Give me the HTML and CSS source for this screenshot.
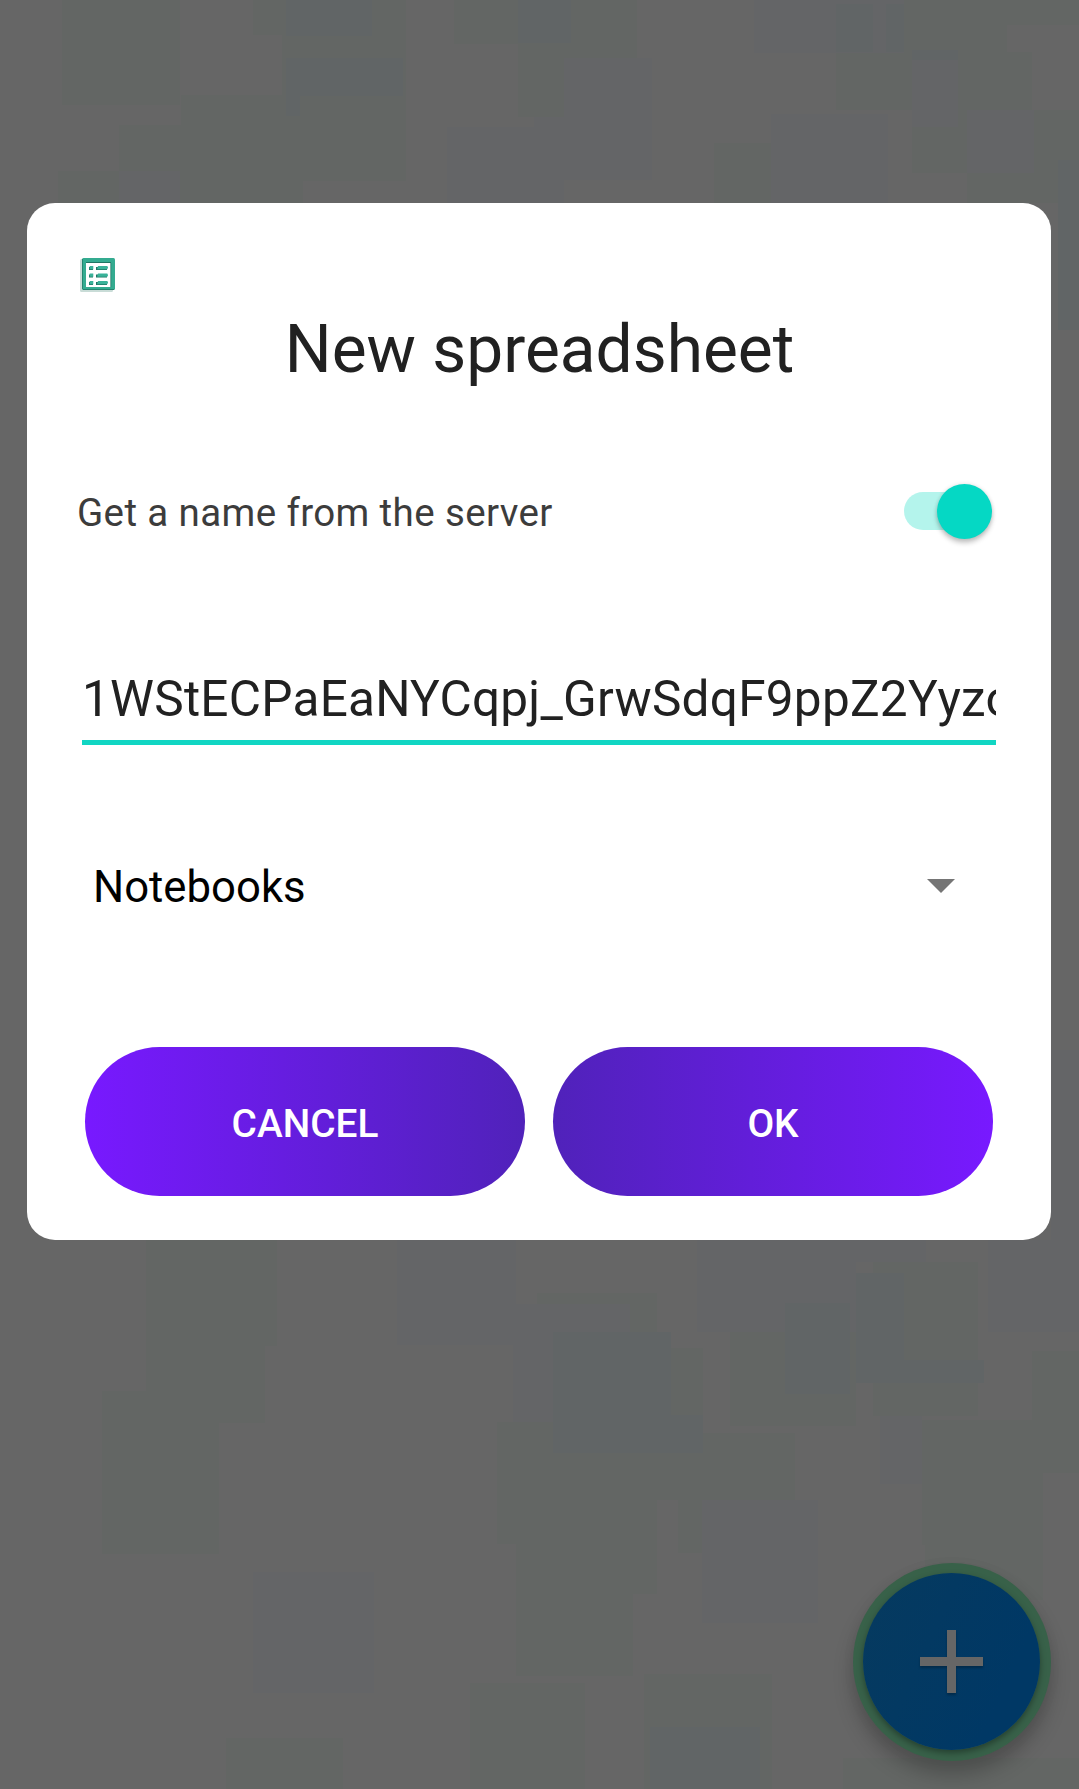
FILE: index.html
```html
<!DOCTYPE html>
<html lang="en">
<head>
<meta charset="utf-8">
<title>New spreadsheet</title>
<link rel="stylesheet" href="styles.css">
</head>
<body>
<svg class="backdrop" viewBox="0 0 1079 1789" aria-hidden="true">
  <g class="green">
    <path d="M62 0h118v105H62zM253 0h153v35H253zM282 35h124v146H282zM181 95h101v86H181zM119 125h62v46h-62zM58 171h245v32H58z"/>
    <path d="M454 0h183v44H454zM518 44h119v14H518zM518 58h46v59h-46zM904 0h175v25H904zM904 25h103v27H904zM836 52h196v58H836zM714 143h57v60h-57zM912 110h55v63h-55zM1034 110h45v63h-45zM967 173h112v30H967z"/>
    <path d="M146 1240h131v106H146zM146 1346h119v77H146zM102 1391h117v163H102zM537 1293h120v39H537zM671 1348h32v67h-32zM497 1422h160v122H497zM657 1433h138v67H657zM678 1500h24v53h-24zM516 1544h141v50H516zM516 1594h117v82H516zM470 1683h115v106H470zM644 1674h128v115H644zM226 1738h117v51H226z"/>
    <path d="M730 1332h126v94H730zM873 1262h105v154H873zM922 1420h121v125H922zM1032 1351h47v122h-47zM843 1758h236v31H843zM925 1540h118v60H925z"/>
  </g>
  <g class="blue">
    <path d="M119 171h61v32h-61zM564 58h88v122h-88zM534 117h30v10h-30zM447 127h117v76H447zM754 0h150v53H754zM912 60h46v67h-46zM771 114h117v89H771zM967 110h67v63h-67z"/>
    <path d="M397 1240h119v105H397zM516 1304h114v28H516zM513 1332h41v90h-41zM702 1500h116v123H702zM253 1572h121v121H253zM697 1240h229v22H697zM697 1262h159v70H697zM988 1240h91v92h-91zM880 1416h42v68h-42zM1051 490h28v150h-28zM1051 1050h28v190h-28z"/>
  </g>
  <g class="teal">
    <path d="M286 0h86v36h-86zM286 58h117v38H286zM286 96h14v20h-14zM518 0h53v43h-53zM836 4h37v48h-37zM886 4h18v48h-18zM912 50h46v10h-46zM1058 160h21v170h-21z"/>
    <path d="M553 1332h106v83H553zM659 1332h12v83h-12zM553 1415h150v38H553zM785 1303h65v91h-65zM856 1273h48v110h-48zM881 1360h103v23H881zM650 1727h110v62H650z"/>
  </g>
</svg>

<button class="fab" type="button" aria-label="Add">
  <span class="fab-face">
    <svg class="fab-plus" viewBox="0 0 63 63" aria-hidden="true"><path d="M27 0h9v27h27v9H36v27h-9V36H0v-9h27z"/></svg>
  </span>
</button>

<main class="dialog" role="dialog" aria-labelledby="title">
  <svg class="sheet-icon" viewBox="0 0 35 35" aria-hidden="true">
    <rect class="sheet-shadow" x="0" y="2" width="33" height="33" rx="1.5"/>
    <rect class="sheet-frame" x="2" y="1" width="33" height="32" rx="1.5"/>
    <rect class="sheet-page" x="6" y="5" width="25" height="25"/>
    <path class="sheet-edge" d="M6 5h25v1H6zM3 32.2h31v.8H3zM30.4 6h.8v24h-.8zM2 2h.7v30H2z"/>
    <path class="sheet-edge" d="M9 10h4v3H9zM16 10h11v3H16zM9 17.6h4v3H9zM16 17.6h11v3H16zM9 25h4v3H9zM16 25h11v3H16z"/>
    <path class="sheet-row" d="M9.7 9h3.6v3.2H9.7zM18 9h9.3l.8 1.6-.8 1.6H17zM9.7 16.6h3.6v3.2H9.7zM18 16.6h9.3l.8 1.6-.8 1.6H17zM9.7 24h3.6v3.2H9.7zM18 24h9.3l.8 1.6-.8 1.6H17z"/>
  </svg>
  <h1 class="title" id="title">New spreadsheet</h1>

  <div class="setting">
    <span class="setting-label">Get a name from the server</span>
    <span class="switch" role="switch" aria-checked="true"><span class="switch-thumb"></span></span>
  </div>

  <div class="field">1WStECPaEaNYCqpj_GrwSdqF9ppZ2Yyzo</div>

  <div class="select">
    <span class="select-value">Notebooks</span>
    <svg class="select-arrow" viewBox="0 0 28 14" aria-hidden="true"><path d="M0 0h28L14 14z"/></svg>
  </div>

  <div class="actions">
    <button class="action cancel" type="button">CANCEL</button>
    <button class="action ok" type="button">OK</button>
  </div>
</main>
</body>
</html>
```

FILE: styles.css
```css
* { box-sizing: border-box; }

body {
  margin: 0;
  height: 1789px;
  padding: 203px 28px 0 27px;
  overflow: hidden;
  background: #666;
  font-family: Roboto, "Liberation Sans", sans-serif;
}

button { border: 0; padding: 0; font: inherit; }

.backdrop {
  position: absolute;
  top: 0;
  left: 0;
  width: 1079px;
  height: 1789px;
}
.green { fill: #636664; }
.blue { fill: #646567; }
.teal { fill: #616566; }

.fab {
  position: absolute;
  left: 853px;
  top: 1563px;
  width: 198px;
  height: 198px;
  display: grid;
  place-items: center;
  border-radius: 50%;
  background: #386149;
  box-shadow: 0 14px 20px rgba(0, 0, 0, .22), 0 2px 14px rgba(0, 0, 0, .04);
}
.fab-face {
  width: 177px;
  height: 177px;
  margin: 0 1px 1px 0;
  display: grid;
  place-items: center;
  border-radius: 50%;
  background: linear-gradient(115deg, #063a5f, #003865 75%);
  box-shadow: 0 3px 6px rgba(0, 0, 0, .35);
}
.fab-plus {
  width: 63px;
  height: 63px;
  fill: #666;
  filter: drop-shadow(0 2px 1px rgba(0, 0, 0, .25));
}

.dialog {
  position: relative;
  display: flex;
  flex-direction: column;
  height: 1037px;
  padding: 54px 50px 0 51px;
  border-radius: 28px;
  background: #fff;
}

.sheet-icon {
  width: 35px;
  height: 35px;
  margin-left: 2px;
}
.sheet-shadow { fill: #c9dcd7; }
.sheet-frame { fill: #34ab90; }
.sheet-page { fill: #fff; }
.sheet-edge { fill: #1f7563; }
.sheet-row { fill: #3ab299; }

.title {
  margin: 18px 0 0;
  color: #212121;
  font-size: 65.8px;
  font-weight: 400;
  line-height: 80px;
  text-align: center;
}

.setting {
  display: flex;
  align-items: center;
  justify-content: space-between;
  height: 60px;
  margin: 91px 9px 0 -1px;
}
.setting-label {
  padding-top: 3px;
  color: #3c3c3c;
  font-size: 38.5px;
  letter-spacing: .38px;
}
.switch {
  display: flex;
  align-items: center;
  justify-content: flex-end;
  width: 88px;
  height: 38px;
  border-radius: 19px;
  background: linear-gradient(90deg, #b4f4ec 70px, transparent 70px);
}
.switch-thumb {
  width: 55px;
  height: 55px;
  flex: none;
  border-radius: 50%;
  background: #05d8c4;
  box-shadow: 0 4px 5px rgba(0, 0, 0, .22), 0 0 4px rgba(0, 0, 0, .12);
}

.field {
  height: 78px;
  margin: 126px 5px 0 4px;
  overflow: hidden;
  border-bottom: 5px solid #11d6c3;
  color: #212121;
  font-size: 49.5px;
  letter-spacing: .26px;
  line-height: 64px;
  white-space: nowrap;
}

.select {
  display: flex;
  align-items: center;
  justify-content: space-between;
  height: 60px;
  margin: 111px 46px 0 15px;
  color: #000;
  font-size: 43.7px;
}
.select-value { padding-top: 2px; }
.select-arrow {
  width: 28px;
  height: 14px;
  fill: #757575;
}

.actions {
  display: grid;
  grid-template-columns: 440px 440px;
  gap: 28px;
  margin: 131px 0 0 7px;
}
.action {
  height: 149px;
  padding-top: 4px;
  border-radius: 75px;
  color: #fff;
  font-size: 38.8px;
  font-weight: 500;
}
.cancel { background: linear-gradient(90deg, #7819ff, #5022ba); }
.ok { background: linear-gradient(90deg, #5022ba, #7819ff); }
```
